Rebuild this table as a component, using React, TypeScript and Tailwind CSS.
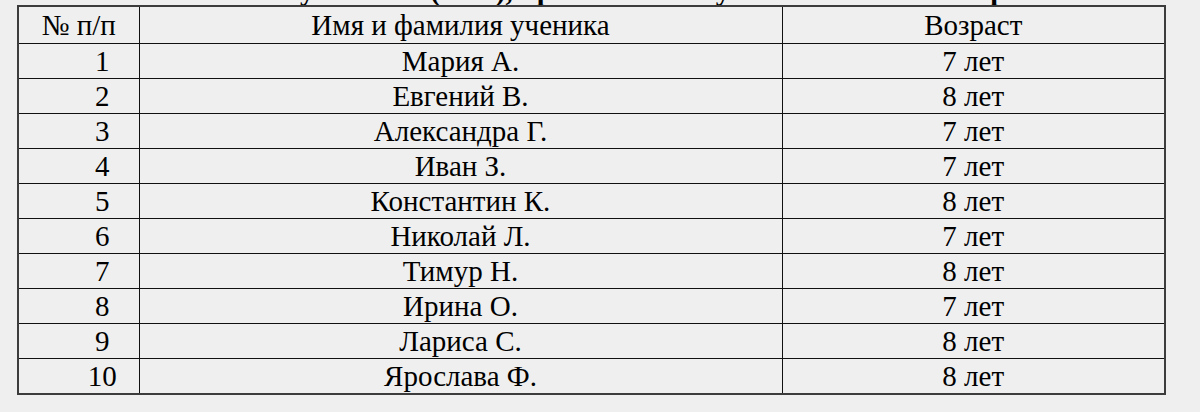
import React from "react";

const rows: [string, string, string][] = [
  ["1", "Мария А.", "7 лет"],
  ["2", "Евгений В.", "8 лет"],
  ["3", "Александра Г.", "7 лет"],
  ["4", "Иван З.", "7 лет"],
  ["5", "Константин К.", "8 лет"],
  ["6", "Николай Л.", "7 лет"],
  ["7", "Тимур Н.", "8 лет"],
  ["8", "Ирина О.", "7 лет"],
  ["9", "Лариса С.", "8 лет"],
  ["10", "Ярослава Ф.", "8 лет"],
];

const cell = "text-center border border-[#111] p-0 align-middle font-['Liberation_Serif','DejaVu_Serif',serif]";

export default function App() {
  return (
    <div className="w-[1200px] h-[412px] bg-[#efefef] text-black overflow-hidden font-['Liberation_Serif','DejaVu_Serif',serif]">
      <div className="h-[5px] overflow-hidden pl-[300px]">
        <div className="mt-[-24px] text-[29px] leading-[29px] font-bold whitespace-nowrap font-['Liberation_Serif','DejaVu_Serif',serif]">
          учеников (всех), принимавших участие в новом театре
        </div>
      </div>
      <div className="pl-[17px]">
        <table className="w-[1147px] table-fixed border-collapse border-2 border-[#3c3c3c] text-[29px] leading-[34px] font-['Liberation_Serif','DejaVu_Serif',serif]">
          <colgroup>
            <col className="w-[121px]" />
            <col className="w-[643px]" />
            <col className="w-[383px]" />
          </colgroup>
          <thead>
            <tr className="h-[37px]">
              <th className={`font-normal ${cell}`}>№ п/п</th>
              <th className={`font-normal ${cell}`}>Имя и фамилия ученика</th>
              <th className={`font-normal ${cell}`}>Возраст</th>
            </tr>
          </thead>
          <tbody>
            {rows.map(([n, name, age]) => (
              <tr key={n} className="h-[35px]">
                <td className={`pl-[47px] ${cell}`}>{n}</td>
                <td className={cell}>{name}</td>
                <td className={cell}>{age}</td>
              </tr>
            ))}
          </tbody>
        </table>
      </div>
    </div>
  );
}
